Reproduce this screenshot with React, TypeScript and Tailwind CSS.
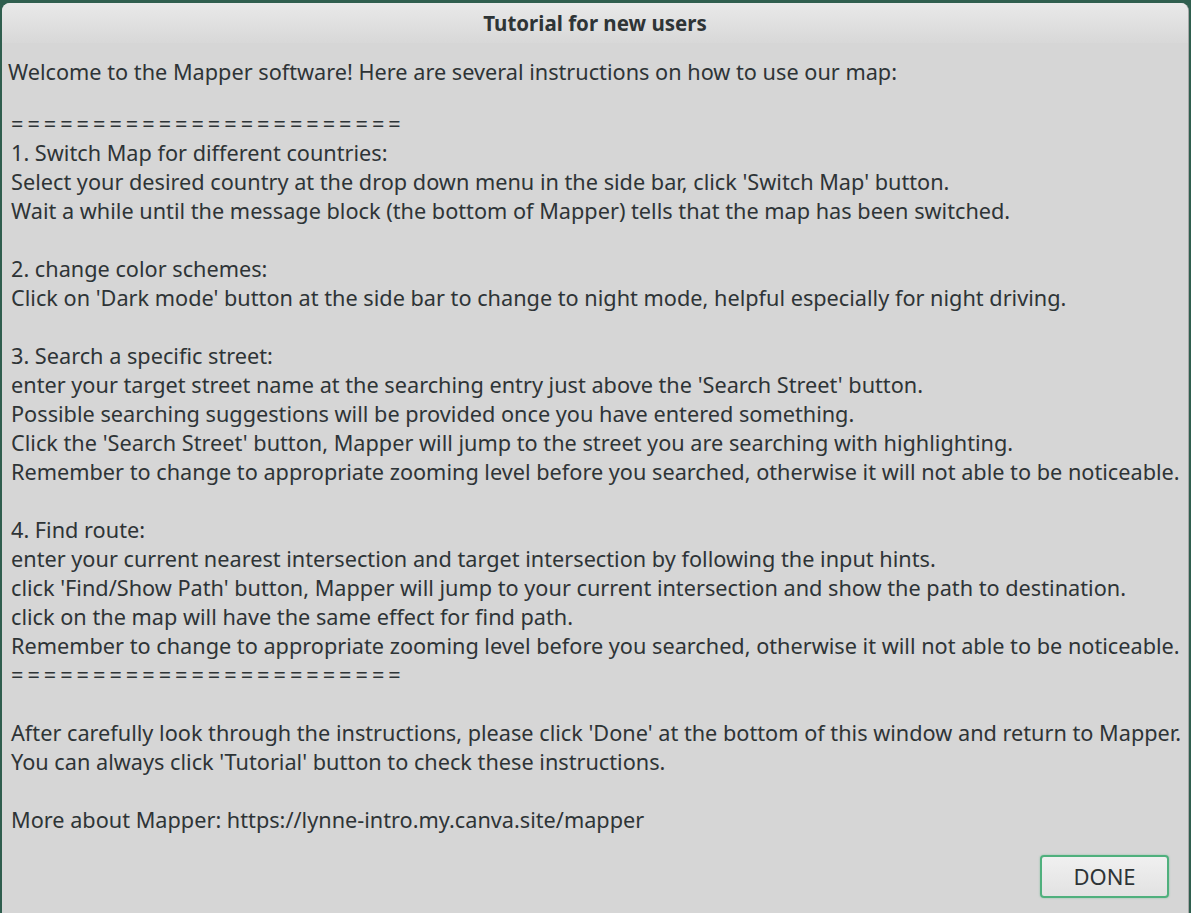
const lines: string[] = [
  "========================",
  "1. Switch Map for different countries:",
  "Select your desired country at the drop down menu in the side bar, click 'Switch Map' button.",
  "Wait a while until the message block (the bottom of Mapper) tells that the map has been switched.",
  "",
  "2. change color schemes:",
  "Click on 'Dark mode' button at the side bar to change to night mode, helpful especially for night driving.",
  "",
  "3. Search a specific street:",
  "enter your target street name at the searching entry just above the 'Search Street' button.",
  "Possible searching suggestions will be provided once you have entered something.",
  "Click the 'Search Street' button, Mapper will jump to the street you are searching with highlighting.",
  "Remember to change to appropriate zooming level before you searched, otherwise it will not able to be noticeable.",
  "",
  "4. Find route:",
  "enter your current nearest intersection and target intersection by following the input hints.",
  "click 'Find/Show Path' button, Mapper will jump to your current intersection and show the path to destination.",
  "click on the map will have the same effect for find path.",
  "Remember to change to appropriate zooming level before you searched, otherwise it will not able to be noticeable.",
  "========================",
  "",
  "After carefully look through the instructions, please click 'Done' at the bottom of this window and return to Mapper.",
  "You can always click 'Tutorial' button to check these instructions.",
  "",
  "More about Mapper: https://lynne-intro.my.canva.site/mapper",
];

export default function App() {
  return (
    <div className="w-[1191px] h-[913px] bg-[#2f5e4e] pt-[3px] pl-[2px] pr-[2px] overflow-hidden font-['Noto_Sans',sans-serif]">
      <div className="h-[910px] flex flex-col rounded-t-[8px] bg-[#d6d6d6] border-r border-[#a8a8a8] overflow-hidden">
        {/* Title bar */}
        <div className="h-[40px] shrink-0 flex items-center justify-center bg-gradient-to-b from-[#e9e9e9] to-[#d8d8d8] text-[20.5px] font-bold text-[#2e3436]">
          Tutorial for new users
        </div>

        {/* Body */}
        <div className="flex-1 flex flex-col text-[21.7px] leading-[29px] text-[#2e3436]">
          <div className="pl-[6px] pt-[14px]">
            Welcome to the Mapper software! Here are several instructions on how to use our map:
          </div>
          <div className="h-[23px]" />
          <div className="pl-[9px]">
            {lines.map((line, i) => (
              <div
                key={i}
                className={line.startsWith("=") ? "h-[29px] whitespace-pre tracking-[4px]" : "h-[29px] whitespace-pre"}
              >
                {line}
              </div>
            ))}
          </div>

          <div className="flex-1 flex items-end justify-end pr-[19px] pb-[15px]">
            <button className="w-[129px] h-[43px] rounded-[4px] border-2 border-[#4fb07d] bg-gradient-to-b from-[#f0f0f0] to-[#e2e2e2] text-[22px] text-[#2e3436] shadow-[0_0_2px_rgba(79,176,125,0.6)]">
              DONE
            </button>
          </div>
        </div>
      </div>
    </div>
  );
}
